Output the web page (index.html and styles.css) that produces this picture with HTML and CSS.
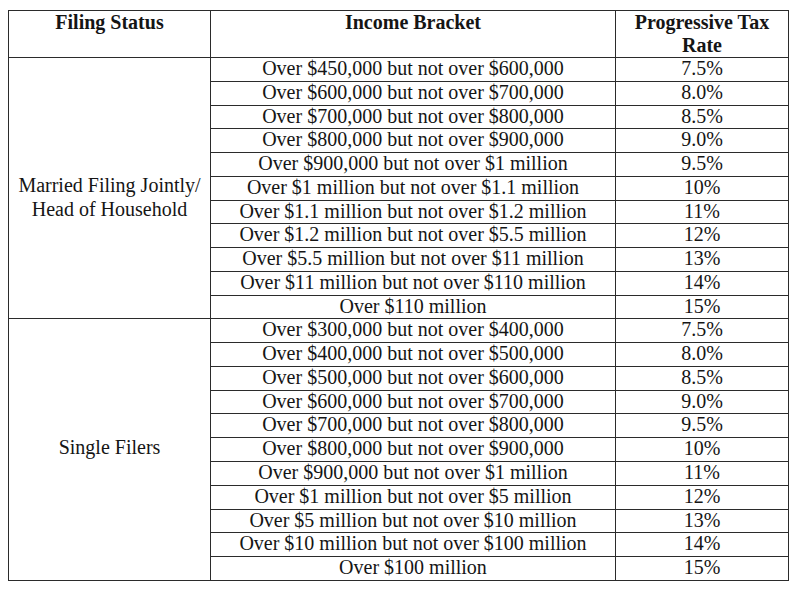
FILE: index.html
```html
<!DOCTYPE html>
<html>
<head>
<meta charset="utf-8">
<link rel="stylesheet" href="styles.css">
</head>
<body>
<table class="tax">
  <colgroup>
    <col class="c1">
    <col class="c2">
    <col class="c3">
  </colgroup>
  <thead>
    <tr>
      <th>Filing Status</th>
      <th>Income Bracket</th>
      <th>Progressive Tax Rate</th>
    </tr>
  </thead>
  <tbody>
    <tr><td class="status two" rowspan="11">Married Filing Jointly/<br>Head of Household</td><td>Over $450,000 but not over $600,000</td><td>7.5%</td></tr>
    <tr><td>Over $600,000 but not over $700,000</td><td>8.0%</td></tr>
    <tr><td>Over $700,000 but not over $800,000</td><td>8.5%</td></tr>
    <tr><td>Over $800,000 but not over $900,000</td><td>9.0%</td></tr>
    <tr><td>Over $900,000 but not over $1 million</td><td>9.5%</td></tr>
    <tr><td>Over $1 million but not over $1.1 million</td><td>10%</td></tr>
    <tr><td>Over $1.1 million but not over $1.2 million</td><td>11%</td></tr>
    <tr><td>Over $1.2 million but not over $5.5 million</td><td>12%</td></tr>
    <tr><td>Over $5.5 million but not over $11 million</td><td>13%</td></tr>
    <tr><td>Over $11 million but not over $110 million</td><td>14%</td></tr>
    <tr><td>Over $110 million</td><td>15%</td></tr>
    <tr><td class="status one" rowspan="11">Single Filers</td><td>Over $300,000 but not over $400,000</td><td>7.5%</td></tr>
    <tr><td>Over $400,000 but not over $500,000</td><td>8.0%</td></tr>
    <tr><td>Over $500,000 but not over $600,000</td><td>8.5%</td></tr>
    <tr><td>Over $600,000 but not over $700,000</td><td>9.0%</td></tr>
    <tr><td>Over $700,000 but not over $800,000</td><td>9.5%</td></tr>
    <tr><td>Over $800,000 but not over $900,000</td><td>10%</td></tr>
    <tr><td>Over $900,000 but not over $1 million</td><td>11%</td></tr>
    <tr><td>Over $1 million but not over $5 million</td><td>12%</td></tr>
    <tr><td>Over $5 million but not over $10 million</td><td>13%</td></tr>
    <tr><td>Over $10 million but not over $100 million</td><td>14%</td></tr>
    <tr><td>Over $100 million</td><td>15%</td></tr>
  </tbody>
</table>
</body>
</html>
```

FILE: styles.css
```css
html, body {
  background: #ffffff;
}
body {
  margin: 8px;
  font-family: "Liberation Serif", "Times New Roman", serif;
  font-size: 20px;
  color: #151515;
}
.tax {
  margin-top: 2px;
  border-collapse: collapse;
  width: 780px;
  table-layout: fixed;
}
.c1 { width: 202px; }
.c2 { width: 405px; }
.c3 { width: 173px; }
.tax th, .tax td {
  border: 1px solid #2b2b2b;
  padding: 0;
  text-align: center;
}
.tax th {
  font-weight: bold;
  vertical-align: top;
  line-height: 23px;
  height: 46px;
}
.tax td {
  height: 22.77px;
  line-height: 20.77px;
  vertical-align: top;
}
.tax td.status {
  vertical-align: middle;
  line-height: 24px;
}
.tax td.status.two {
  padding-top: 18px;
}
.tax td.status.one {
  padding-bottom: 6px;
}
```
